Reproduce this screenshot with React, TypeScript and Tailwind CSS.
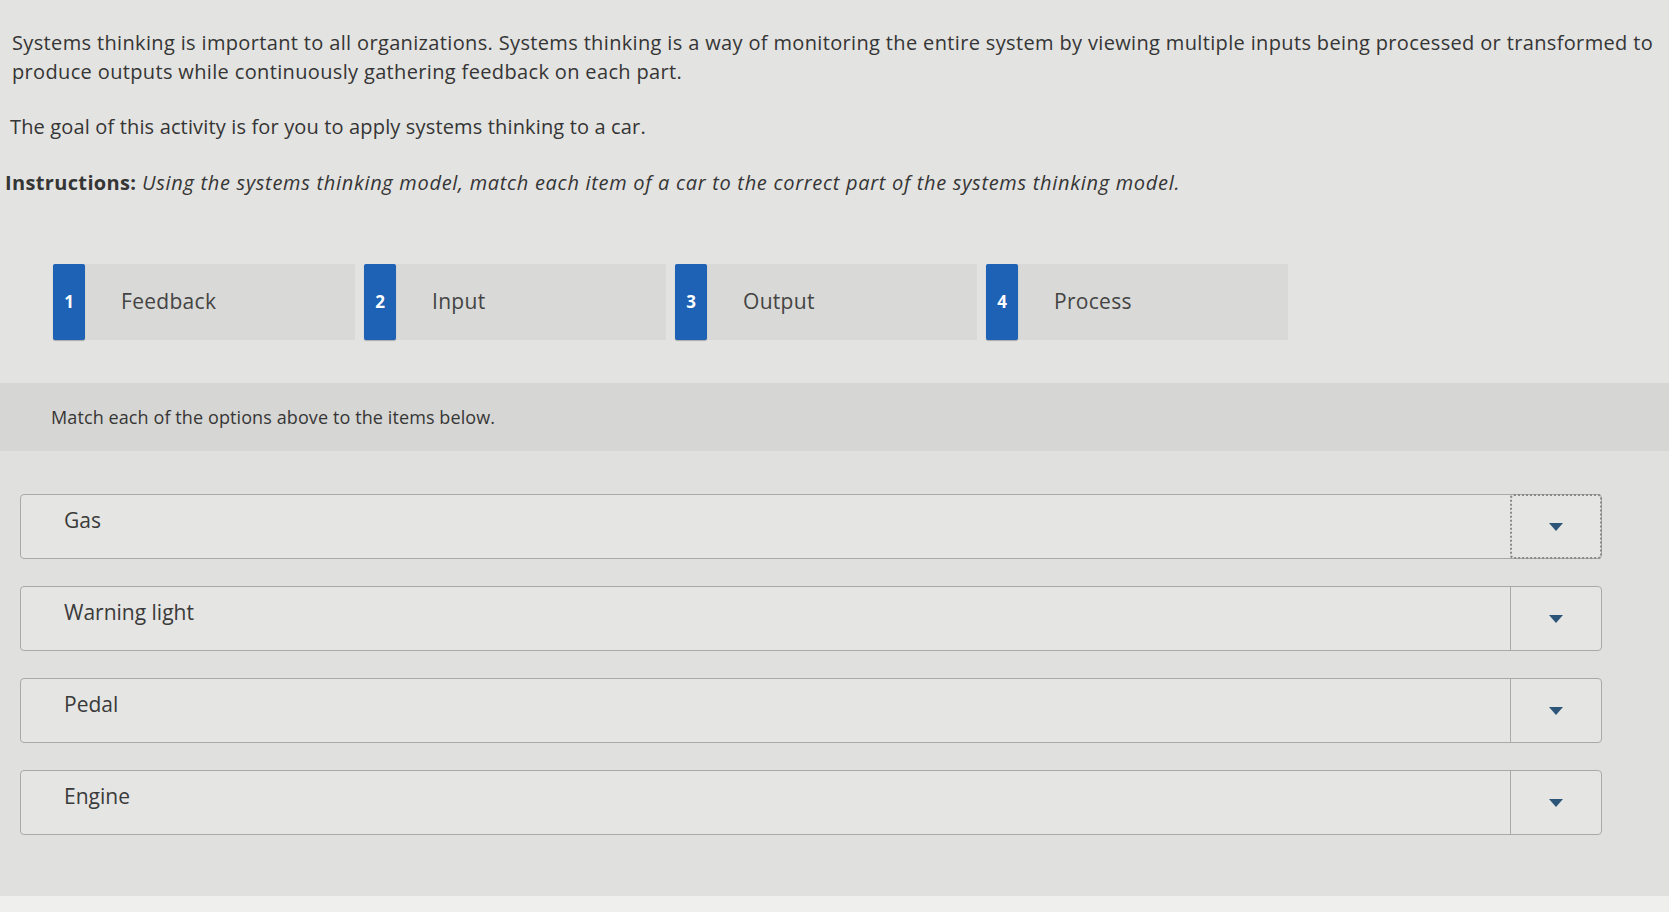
const options = [
  { n: "1", label: "Feedback" },
  { n: "2", label: "Input" },
  { n: "3", label: "Output" },
  { n: "4", label: "Process" },
]

const items = ["Gas", "Warning light", "Pedal", "Engine"]

function Caret() {
  return (
    <svg width="14" height="8" viewBox="0 0 14 8">
      <path d="M0 0 L14 0 L7 8 Z" fill="#2c5579" />
    </svg>
  )
}

export default function App() {
  return (
    <div className="w-[1669px] h-[912px] flex flex-col bg-[#e3e3e1] text-[#353535] font-['Open_Sans','Liberation_Sans',sans-serif] overflow-hidden">
      <div className="px-3 pt-[28px] text-[20px] leading-[29px] tracking-[0.35px]">
        <p>
          Systems thinking is important to all organizations. Systems thinking is a way of monitoring the entire system by viewing multiple inputs being processed or transformed to produce outputs while continuously gathering feedback on each part.
        </p>
        <p className="mt-[26px] -ml-0.5 tracking-[0.15px]">
          The goal of this activity is for you to apply systems thinking to a car.
        </p>
        <p className="mt-[27px] -ml-[7px]">
          <span className="font-bold">Instructions:</span>{" "}
          <em className="tracking-[0.7px]">Using the systems thinking model, match each item of a car to the correct part of the systems thinking model.</em>
        </p>
      </div>

      <div className="flex gap-[9px] pl-[53px] mt-[67px]">
        {options.map(o => (
          <div key={o.n} className="flex w-[302px] h-[76px] bg-[#d9d9d7]">
            <div className="w-[32px] shrink-0 bg-[#1d62b5] rounded-[2px] flex items-center justify-center text-white font-bold text-[17px] shadow-[0_1px_1px_rgba(0,0,0,0.25)]">
              {o.n}
            </div>
            <div className="flex items-center pl-[36px] text-[21px] tracking-[0.3px] text-[#444]">{o.label}</div>
          </div>
        ))}
      </div>

      <div className="mt-[43px] h-[68px] bg-[#d6d6d4] flex items-center pl-[51px] text-[18px] tracking-[0.1px] text-[#363636]">
        Match each of the options above to the items below.
      </div>

      <div className="flex-1 bg-[#e0e0de] flex flex-col gap-[27px] pt-[43px] pl-[20px] pr-[67px]">
        {items.map((it, i) => (
          <div key={it} className="flex h-[65px] rounded-[4px] border border-[#a9a9a7] bg-[#e5e5e3]">
            <div className="flex-1 flex items-center pl-[43px] pb-[12px] text-[21px] text-[#3a3a3a]">{it}</div>
            <div
              className={
                i === 0
                  ? "w-[92px] -my-px -mr-px rounded-[4px] border-2 border-dotted border-[#8a8a8a] flex items-center justify-center"
                  : "w-[91px] border-l border-[#a9a9a7] flex items-center justify-center"
              }
            >
              <Caret />
            </div>
          </div>
        ))}
      </div>

      <div className="h-[16px] bg-[#efefed]" />
    </div>
  )
}
